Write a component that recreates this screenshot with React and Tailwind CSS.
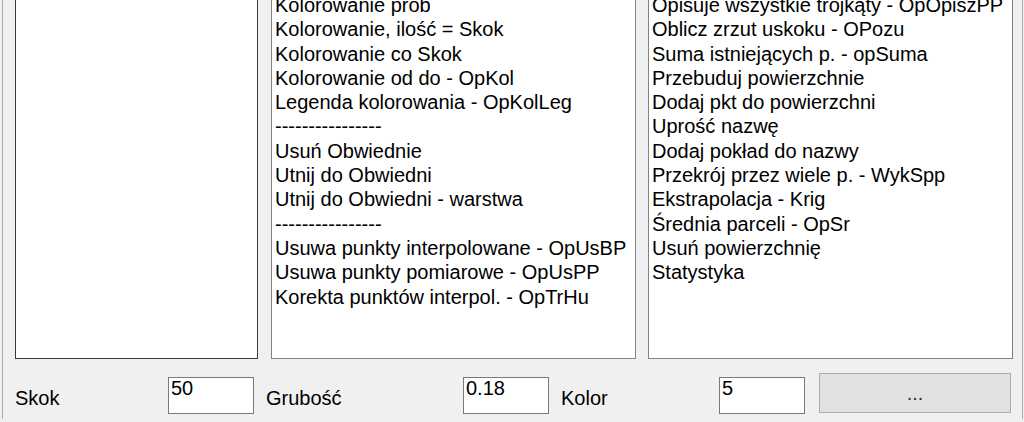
import React from "react";

const list2 = [
  "Kolorowanie prob",
  "Kolorowanie, ilość = Skok",
  "Kolorowanie co Skok",
  "Kolorowanie od do - OpKol",
  "Legenda kolorowania - OpKolLeg",
  "----------------",
  "Usuń Obwiednie",
  "Utnij do Obwiedni",
  "Utnij do Obwiedni - warstwa",
  "----------------",
  "Usuwa punkty interpolowane - OpUsBP",
  "Usuwa punkty pomiarowe - OpUsPP",
  "Korekta punktów interpol. - OpTrHu",
];

const list3 = [
  "Opisuje wszystkie trojkąty - OpOpiszPP",
  "Oblicz zrzut uskoku - OPozu",
  "Suma istniejących p. - opSuma",
  "Przebuduj powierzchnie",
  "Dodaj pkt do powierzchni",
  "Uprość nazwę",
  "Dodaj pokład do nazwy",
  "Przekrój przez wiele p. - WykSpp",
  "Ekstrapolacja - Krig",
  "Średnia parceli - OpSr",
  "Usuń powierzchnię",
  "Statystyka",
];

function ListBox({ items, width, borderClass }) {
  return (
    <div
      className={`h-[359px] bg-white border-x border-b overflow-hidden ${borderClass}`}
      style={{ width }}
    >
      <div className="-mt-[7px] pl-[3px]">
        {items.map((t, i) => (
          <div key={i} className="leading-[24.3px] h-[24.3px] whitespace-nowrap text-black">
            {t}
          </div>
        ))}
      </div>
    </div>
  );
}

function Field({ value }) {
  return (
    <div className="mt-[18px] w-[86px] h-[37px] bg-white border border-[#7a7a7a] pl-[2px] leading-[20px] text-black shrink-0">
      {value}
    </div>
  );
}

export default function App() {
  return (
    <div
      className="w-[1024px] h-[422px] bg-[#f0f0f0] overflow-hidden text-[20px]"
      style={{ fontFamily: '"Liberation Sans", Arial, sans-serif' }}
    >
      <div className="ml-[2px] w-[1021px] h-[419px] border-x border-[#adadad] pl-[12px]">
        <div className="flex">
          <ListBox items={[]} width={243} borderClass="border-[#3a3a3a]" />
          <div className="ml-[13px]">
            <ListBox items={list2} width={365} borderClass="border-[#828282]" />
          </div>
          <div className="ml-[12px]">
            <ListBox items={list3} width={365} borderClass="border-[#828282]" />
          </div>
        </div>
        <div className="flex items-start">
          <div className="mt-[28px] leading-[23px] w-[153px] shrink-0 text-black">Skok</div>
          <Field value="50" />
          <div className="mt-[28px] leading-[23px] ml-[12px] w-[197px] shrink-0 text-black">Grubość</div>
          <Field value="0.18" />
          <div className="mt-[28px] leading-[23px] ml-[12px] w-[158px] shrink-0 text-black">Kolor</div>
          <Field value="5" />
          <div className="mt-[14px] ml-[14px] w-[192px] h-[40px] bg-[#e1e1e1] border border-[#adadad] flex items-center justify-center text-[#333] shrink-0 leading-[23px]">
            ...
          </div>
        </div>
      </div>
    </div>
  );
}
